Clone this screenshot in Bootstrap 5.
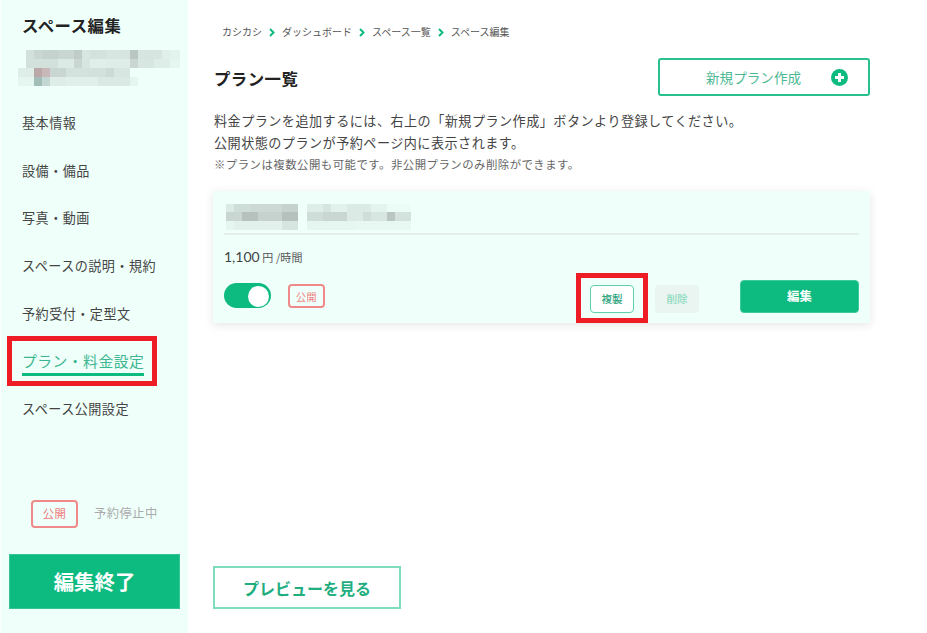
<!DOCTYPE html>
<html lang="ja"><head><meta charset="utf-8"><title>プラン一覧</title>
<link href="https://cdn.jsdelivr.net/npm/bootstrap@5.3.0/dist/css/bootstrap.min.css" rel="stylesheet">
<style>
html,body{height:633px;overflow:hidden;background:#fff}
body{font-family:"Noto Sans CJK JP",sans-serif;color:#333;letter-spacing:.03em;position:relative}
.shell{height:633px}
.side{width:187px;margin-left:1px;background:#effffa;flex:none;height:633px}
.side-title{font-size:16.4px;font-weight:700;margin:15px 0 0 21px;line-height:20px;color:#222}
.mosaic{display:block}
.side-mosaic{margin:15px 0 0 0}
.side-nav{margin-top:11px}
.side-link{display:block;height:47.67px;line-height:47.67px;padding-left:21px;font-size:13.1px;color:#444;text-decoration:none}
.side-link-on{color:#3cb690;font-size:14.8px}
.side-link-on span{display:inline-block;line-height:24px;border-bottom:3px solid #0dba7f;padding-bottom:0}
.status-row{margin:67px 0 0 30px}
.tag-pub{border:2px solid #ef8a8a;border-radius:4px;color:#ef7b7b;font-size:11.4px;background:transparent;display:flex;align-items:center;justify-content:center}
.tag-side{width:47px;height:28px}
.status-off{font-size:12.3px;color:#aaa;margin-left:16px}
.finish-btn{display:block;width:171px;height:55px;margin:26px 0 0 8px;background:#0dba7f;border:1px solid #35c595;border-radius:0;color:#fff;font-size:20.4px;font-weight:700;padding:0;line-height:51px}
.main-col{width:657px;margin-left:25px;height:633px;padding-bottom:24px}
.crumbs{font-size:10px;color:#555;margin:23px 0 0 9px;line-height:18px;gap:7px;letter-spacing:0}
.crumbs svg{width:6px;height:9px}
.head-row{margin-top:17px;height:38px}
.page-title{font-size:16.4px;font-weight:700;margin:2px 0 0;color:#222;line-height:24px;padding-left:1px}
.new-btn{width:212px;height:38px;border:2px solid #27c18d;border-radius:3px;background:#fff;color:#4cb994;font-size:13.6px;padding:0 20px 0 46px}
.new-btn svg{width:17px;height:17px}
.intro{font-size:13.1px;line-height:21.5px;margin:14px 0 0 1px;color:#444}
.intro-note{font-size:11.4px;color:#666;line-height:21px;margin:1px 0 0 1px}
.plan{background:#effffa;margin-top:16px;height:132px;box-shadow:0 2px 9px rgba(0,0,0,.1);padding:13px 11px 0;border:0;border-radius:0}
.plan-rule{border-bottom:2px solid #e6eeeb;height:31px}
.plan-price{font-size:11px;color:#555;margin-top:10px;line-height:24px;letter-spacing:.01em}
.plan-price b{font-family:Lato,"Noto Sans CJK JP",sans-serif;font-weight:400;font-size:14px;color:#444;letter-spacing:0}
.plan-controls{margin-top:13px;height:34px}
.toggle{width:47px;height:25px;border-radius:13px;background:#0dba7f;margin-top:1px;padding:2.5px 2.5px 0 0}
.knob{width:21px;height:21px;border-radius:50%;background:#fff;margin-left:auto}
.tag-plan{width:37px;height:24px;margin:2px 0 0 17px;font-size:10px}
.copy-btn,.del-btn{width:44px;height:28px;font-size:10.6px;padding:0;border-radius:4px;margin-top:3px;line-height:24px}
.copy-btn{margin-left:auto;border:1px solid #5fd0aa;background:#fff;color:#2fa47d;font-weight:500}
.btn.del-btn:disabled{margin-left:21px;background:#eaf4f1;border:0;color:#8ddcbf;opacity:1;font-weight:500}
.edit-btn{width:119px;height:33px;margin-left:41px;margin-top:-2px;background:#0dba7f;border:1px solid #3bca9a;border-radius:4px;color:#fff;font-size:12.4px;font-weight:700;padding:0}
.preview-btn{width:188px;height:43px;border:2px solid #7fdcbc;border-radius:0;background:#fff;color:#1fae80;font-size:16px;font-weight:700;padding:0;margin-top:auto}
.callout{position:absolute;border:5px solid #ee1c25;pointer-events:none}
.callout-nav{left:7px;top:336px;width:150px;height:50px}
.callout-copy{left:576px;top:273px;width:72px;height:50px}
</style></head><body>
<div class="d-flex shell">
<aside class="side d-flex flex-column">
<div class="side-title">スペース編集</div>
<svg class="mosaic side-mosaic" width="187" height="38" viewBox="0 0 187 38" aria-hidden="true">
<g fill="#333" shape-rendering="crispEdges">
<rect x="25" y="0" width="8" height="9" opacity=".15"/><rect x="33" y="0" width="8" height="9" opacity=".2"/><rect x="41" y="0" width="16" height="9" opacity=".22"/><rect x="57" y="0" width="16" height="9" opacity=".2"/><rect x="73" y="0" width="8" height="9" opacity=".25"/><rect x="81" y="0" width="8" height="9" opacity=".12"/><rect x="89" y="0" width="16" height="9" opacity=".14"/><rect x="105" y="0" width="16" height="9" opacity=".12"/><rect x="121" y="0" width="8" height="9" opacity=".13"/><rect x="129" y="0" width="8" height="9" opacity=".28"/><rect x="137" y="0" width="24" height="9" opacity=".13"/><rect x="161" y="0" width="8" height="9" opacity=".08"/><rect x="169" y="0" width="10" height="9" opacity=".06"/>
<rect x="25" y="9" width="8" height="9" opacity=".15"/><rect x="33" y="9" width="24" height="9" opacity=".15"/><rect x="57" y="9" width="16" height="9" opacity=".1"/><rect x="73" y="9" width="8" height="9" opacity=".2"/><rect x="81" y="9" width="8" height="9" opacity=".12"/><rect x="89" y="9" width="16" height="9" opacity=".08"/><rect x="105" y="9" width="24" height="9" opacity=".09"/><rect x="129" y="9" width="8" height="9" opacity=".2"/><rect x="137" y="9" width="16" height="9" opacity=".12"/><rect x="153" y="9" width="16" height="9" opacity=".09"/><rect x="169" y="9" width="10" height="9" opacity=".05"/>
<rect x="17" y="18" width="16" height="9" opacity=".09"/><rect x="49" y="18" width="16" height="9" opacity=".2"/><rect x="65" y="18" width="24" height="9" opacity=".14"/><rect x="89" y="18" width="16" height="9" opacity=".15"/><rect x="105" y="18" width="8" height="9" opacity=".18"/><rect x="113" y="18" width="16" height="9" opacity=".12"/>
<rect x="17" y="27" width="16" height="9" opacity=".05"/><rect x="49" y="27" width="16" height="9" opacity=".09"/><rect x="65" y="27" width="32" height="9" opacity=".08"/><rect x="97" y="27" width="32" height="9" opacity=".11"/><rect x="129" y="27" width="8" height="9" opacity=".05"/>
</g>
<rect x="33" y="18" width="8" height="9" fill="#bba8a8"/><rect x="41" y="18" width="8" height="9" fill="#c9b8b8"/><rect x="33" y="27" width="8" height="9" fill="#a3bdb8"/><rect x="41" y="27" width="8" height="9" fill="#c3d6d2"/>
</svg>
<nav class="side-nav">
<a class="side-link" href="#">基本情報</a>
<a class="side-link" href="#">設備・備品</a>
<a class="side-link" href="#">写真・動画</a>
<a class="side-link" href="#">スペースの説明・規約</a>
<a class="side-link" href="#">予約受付・定型文</a>
<a class="side-link side-link-on" href="#"><span>プラン・料金設定</span></a>
<a class="side-link" href="#">スペース公開設定</a>
</nav>
<div class="status-row d-flex align-items-center">
<div class="tag-pub tag-side">公開</div><div class="status-off">予約停止中</div>
</div>
<button class="btn finish-btn" type="button">編集終了</button>
</aside>
<main class="main-col d-flex flex-column">
<div class="crumbs d-flex align-items-center">
<span>カシカシ</span><svg viewBox="0 0 6 9"><path d="M1 1l3.5 3.5L1 8" fill="none" stroke="#0dba7f" stroke-width="2"/></svg>
<span>ダッシュボード</span><svg viewBox="0 0 6 9"><path d="M1 1l3.5 3.5L1 8" fill="none" stroke="#0dba7f" stroke-width="2"/></svg>
<span>スペース一覧</span><svg viewBox="0 0 6 9"><path d="M1 1l3.5 3.5L1 8" fill="none" stroke="#0dba7f" stroke-width="2"/></svg>
<span>スペース編集</span>
</div>
<div class="head-row d-flex justify-content-between align-items-center">
<h1 class="page-title">プラン一覧</h1>
<button class="btn new-btn d-flex align-items-center justify-content-between" type="button"><span>新規プラン作成</span>
<svg viewBox="0 0 17 17"><circle cx="8.5" cy="8.5" r="8.5" fill="#0dba7f"/><path d="M7 4h3v3h3v3h-3v3H7v-3H4V7h3z" fill="#fff"/></svg></button>
</div>
<p class="intro">料金プランを追加するには、右上の「新規プラン作成」ボタンより登録してください。<br>公開状態のプランが予約ページ内に表示されます。</p>
<p class="intro-note">※プランは複数公開も可能です。非公開プランのみ削除ができます。</p>
<section class="card plan">
<div class="plan-rule">
<svg class="mosaic" width="190" height="26" viewBox="0 0 190 26" aria-hidden="true"><g fill="#333" shape-rendering="crispEdges">
<rect x="2" y="0" width="8" height="8" opacity=".1"/><rect x="10" y="0" width="16" height="8" opacity=".17"/><rect x="26" y="0" width="32" height="8" opacity=".19"/><rect x="58" y="0" width="16" height="8" opacity=".22"/><rect x="83" y="0" width="16" height="8" opacity=".09"/><rect x="99" y="0" width="8" height="8" opacity=".13"/><rect x="107" y="0" width="16" height="8" opacity=".07"/><rect x="123" y="0" width="24" height="8" opacity=".1"/><rect x="147" y="0" width="16" height="8" opacity=".06"/><rect x="163" y="0" width="24" height="8" opacity=".02"/>
<rect x="2" y="8" width="16" height="9" opacity=".2"/><rect x="18" y="8" width="16" height="9" opacity=".3"/><rect x="34" y="8" width="24" height="9" opacity=".22"/><rect x="58" y="8" width="16" height="9" opacity=".3"/><rect x="83" y="8" width="16" height="9" opacity=".17"/><rect x="99" y="8" width="24" height="9" opacity=".2"/><rect x="123" y="8" width="16" height="9" opacity=".1"/><rect x="139" y="8" width="8" height="9" opacity=".16"/><rect x="147" y="8" width="16" height="9" opacity=".12"/><rect x="163" y="8" width="8" height="9" opacity=".28"/><rect x="171" y="8" width="16" height="9" opacity=".14"/>
<rect x="2" y="17" width="8" height="9" opacity=".05"/><rect x="10" y="17" width="48" height="9" opacity=".07"/><rect x="58" y="17" width="16" height="9" opacity=".13"/><rect x="83" y="17" width="48" height="9" opacity=".05"/><rect x="131" y="17" width="56" height="9" opacity=".04"/>
</g></svg>
</div>
<div class="plan-price"><b>1,100</b> 円 /時間</div>
<div class="plan-controls d-flex align-items-start">
<div class="toggle"><div class="knob"></div></div>
<div class="tag-pub tag-plan">公開</div>
<button class="btn copy-btn" type="button">複製</button>
<button class="btn del-btn" type="button" disabled>削除</button>
<button class="btn edit-btn" type="button">編集</button>
</div>
</section>
<button class="btn preview-btn" type="button">プレビューを見る</button>
</main>
</div>
<div class="callout callout-nav"></div>
<div class="callout callout-copy"></div>
<script src="https://cdn.jsdelivr.net/npm/bootstrap@5.3.0/dist/js/bootstrap.bundle.min.js"></script>
</body></html>
